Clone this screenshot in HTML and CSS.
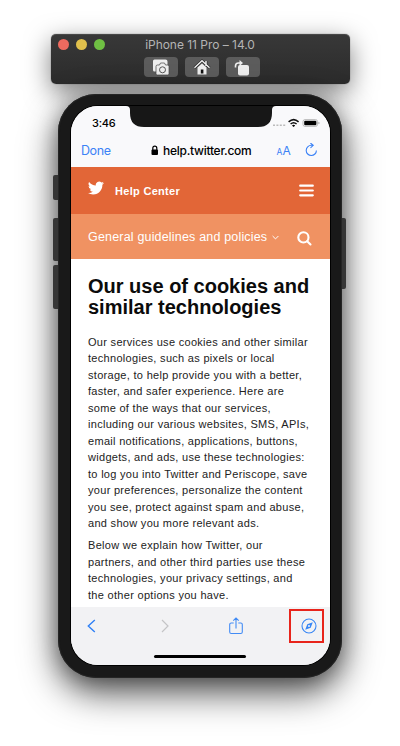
FILE: index.html
```html
<!DOCTYPE html>
<html lang="en">
<head>
<meta charset="utf-8">
<title>iPhone 11 Pro – 14.0</title>
<link rel="stylesheet" href="styles.css">
</head>
<body>
<div class="stage">
  <header class="window-bar">
    <div class="lights"><i class="red"></i><i class="yellow"></i><i class="green"></i></div>
    <div class="window-title">iPhone 11 Pro – 14.0</div>
    <div class="window-buttons">
      <button aria-label="Screenshot"><svg viewBox="0 0 34 20"><path d="M10.500 2.500h11q2 0 2 2v8h-10v2h-3q-1.500 0-1.500-1.500v-9q0-1.500 1.500-1.500z" fill="#eee"/><path d="M13.500 8h2l1-2h4l1 2h2q1.500 0 1.500 1.500v7q0 1.500-1.500 1.500h-10q-1.500 0-1.500-1.500v-7q0-1.500 1.500-1.500z" fill="#eee" stroke="#444" stroke-width=".7"/><circle cx="18.500" cy="12.800" r="3" fill="none" stroke="#555"/></svg></button>
      <button aria-label="Home"><svg viewBox="0 0 34 20"><path d="M21 4v5M9.500 10.800 17 3.800l7.500 7" fill="none" stroke="#222" stroke-width="2.800"/><path d="M21 4v5M9.500 10.800 17 3.800l7.500 7" fill="none" stroke="#eee" stroke-width="1.500"/><path d="M12.500 10.500 17 6.500l4.500 4v7h-9z" fill="#eee"/><path d="M15.800 12.500h2.600v4h-2.600z" fill="#111"/></svg></button>
      <button aria-label="Rotate"><svg viewBox="0 0 34 20"><rect x="12" y="8" width="11" height="10.500" rx="2" fill="#eee"/><path d="M9.500 10.500V9q0-3 3-3h2" fill="none" stroke="#eee" stroke-width="1.600"/><path d="M13.500 3v6l3.500-3z" fill="#eee"/></svg></button>
    </div>
  </header>
  <div class="phone">
    <i class="key mute"></i><i class="key up"></i><i class="key down"></i><i class="key power"></i>
    <main class="screen">
      <svg class="notch" viewBox="0 0 150 21" preserveAspectRatio="none"><path d="M0 0h150q-4 0-4 4v3q0 14-14 14H18Q4 21 4 7V4q0-4-4-4z" fill="#171717"/></svg>
      <div class="status"><span class="time">3:46</span>
        <svg class="signals" width="48" height="10" viewBox="0 0 48 10"><g fill="#bbb"><rect x="0" y="6.500" width="2" height="1.500"/><rect x="3.400" y="6.500" width="2" height="1.500"/><rect x="6.800" y="6.500" width="2" height="1.500"/><rect x="10.200" y="6.500" width="2" height="1.500"/></g><g fill="none" stroke="#111" stroke-width="1.500"><path d="M15.600 3.900q5-4.600 10 0M17.600 6q3-2.600 6 0"/></g><path d="M19 7.500q1.600-1.400 3.200 0L20.600 9z"/><rect x="30" y="1.600" width="14.500" height="6.800" rx="2" fill="#fff" stroke="#aaa" stroke-width=".8"/><rect x="31.200" y="2.700" width="12.200" height="4.600" rx="1"/><path d="M45.500 3.700v2.600q1-.5 1-1.300t-1-1.300z" fill="#999"/></svg>
      </div>
      <nav class="address">
        <span class="done">Done</span>
        <svg class="lock" width="8" height="11" viewBox="0 0 8 11"><rect x=".5" y="4.500" width="6.500" height="5.500" rx="1"/><path d="M1.800 5V3.200q0-2 2-2t2 2V5" fill="none" stroke="#000" stroke-width="1.200"/></svg>
        <span class="host">help.twitter.com</span>
        <span class="textsize"><small>A</small>A</span>
        <svg class="reload" width="13" height="14" viewBox="0 0 13 14" fill="none" stroke="#3b82f6" stroke-width="1.100"><path d="M11.400 7.400a5.100 5.100 0 1 1-5.100-5.100h1.500M5.400 0l2.800 2.300-2.700 2.500"/></svg>
      </nav>
      <section class="brand">
        <svg class="bird" width="16" height="16" viewBox="0 0 24 24"><path fill="#fff" d="M23.950 4.570a10 10 0 0 1-2.820.770 4.960 4.960 0 0 0 2.160-2.720c-.950.550-2 .950-3.130 1.180a4.920 4.920 0 0 0-8.380 4.480A13.900 13.900 0 0 1 1.640 3.160a4.920 4.920 0 0 0 1.520 6.570 4.900 4.900 0 0 1-2.230-.610v.060a4.920 4.920 0 0 0 3.950 4.830 5 5 0 0 1-2.210.080 4.940 4.940 0 0 0 4.600 3.420A9.870 9.870 0 0 1 0 19.540a14 14 0 0 0 7.550 2.210c9.050 0 14-7.500 14-13.980v-.640a10 10 0 0 0 2.400-2.560z"/></svg>
        <strong>Help Center</strong>
        <svg class="menu" width="15" height="13" viewBox="0 0 15 13"><path d="M1.200 1.700h12.600M1.200 6.500h12.600M1.200 11.300h12.600" stroke="#fff" stroke-width="2.200" stroke-linecap="round"/></svg>
      </section>
      <section class="category"><span>General guidelines and policies</span>
        <svg class="chev" width="7" height="5" viewBox="0 0 7 5"><path d="M.6 1 3.500 3.900 6.400 1" fill="none" stroke="#fff"/></svg>
        <svg class="search" width="15" height="15" viewBox="0 0 15 15"><g fill="none" stroke="#fff" stroke-width="2.100" stroke-linecap="round"><circle cx="6.400" cy="6.400" r="5.100"/><path d="m10.200 10.200 3.300 3.300"/></g></svg>
      </section>
      <article>
        <h1>Our use of cookies and<br>similar technologies</h1>
        <p>Our services use cookies and other similar<br>technologies, such as pixels or local<br>storage, to help provide you with a better,<br>faster, and safer experience. Here are<br>some of the ways that our services,<br>including our various websites, SMS, APIs,<br>email notifications, applications, buttons,<br>widgets, and ads, use these technologies:<br>to log you into Twitter and Periscope, save<br>your preferences, personalize the content<br>you see, protect against spam and abuse,<br>and show you more relevant ads.</p>
        <p>Below we explain how Twitter, our<br>partners, and other third parties use these<br>technologies, your privacy settings, and<br>the other options you have.</p>
      </article>
      <footer class="tools">
        <svg width="9" height="14" viewBox="0 0 9 14"><path d="M7.800 1 1.300 7 7.800 13" fill="none" stroke="#2f80f6" stroke-width="1.400"/></svg>
        <svg class="next" width="8" height="14" viewBox="0 0 8 14"><path d="m1 1 6 6-6 6" fill="none" stroke="#c4c4c6" stroke-width="1.200"/></svg>
        <svg class="share" width="14" height="18" viewBox="0 0 14 18" fill="none" stroke="#438cf5" stroke-width="1.100"><path d="M4.700 6H2.200Q.7 6 .7 7.500V15q0 1.500 1.500 1.500h9.600q1.500 0 1.500-1.500V7.500Q13.300 6 11.800 6H9.300M7 11.500V1M4.300 3.600 7 1l2.700 2.600"/></svg>
        <span class="highlight"><svg width="16" height="16" viewBox="0 0 16 16"><circle cx="8" cy="8" r="7" fill="none" stroke="#3987f5" stroke-width="1.100"/><path fill="#3987f5" fill-rule="evenodd" d="m11.800 4.200-2.100 5.500-5.500 2.100 2.100-5.500zM8 7a1 1 0 1 0 0 2 1 1 0 0 0 0-2z"/></svg></span>
        <i class="home-line"></i>
      </footer>
    </main>
  </div>
</div>
</body>
</html>
```
FILE: styles.css
```css
* { box-sizing: border-box; }
body { margin: 0; background: #fff; font-family: "Liberation Sans", Arial, sans-serif; }
svg { display: block; flex: none; }
.stage { width: 400px; height: 746px; padding-top: 34px; overflow: hidden; }
.window-bar { position: relative; width: 299px; height: 50px; margin: 0 0 10px 50.5px; border-radius: 5px; background: linear-gradient(#383838, #2b2b2b); border-top: 1px solid #484848; box-shadow: 0 0 1px #444, 0 8px 26px rgba(0,0,0,.5); }
.lights { position: absolute; left: 7px; top: 4px; display: flex; gap: 7px; }
.lights i { width: 11.3px; height: 11.3px; border-radius: 50%; }
.red { background: #ee6a5f; }
.yellow { background: #e0c04c; }
.green { background: #6fc043; }
.window-title { height: 22px; font: 12px/20px Inter, sans-serif; color: #b4b4b4; text-align: center; white-space: nowrap; letter-spacing: -.03px; }
.window-buttons { display: flex; justify-content: center; gap: 7px; padding-left: 3px; }
.window-buttons button { padding: 0; border: 0; width: 34px; height: 20px; border-radius: 4px; background: #5c5c5c; }
.phone { position: relative; width: 284px; height: 583.5px; margin-left: 58px; padding: 12px 12.500px 13px 13px; border-radius: 38px; background: #191919; box-shadow: inset 0 0 1px 1px #272727, 0 14px 36px rgba(0,0,0,.7), 0 2px 20px rgba(0,0,0,.25); }
.key { position: absolute; width: 5px; left: -5px; border-radius: 2px 0 0 2px; background: #363636; }
.mute { top: 81px; height: 25px; }
.up { top: 124px; height: 43px; }
.down { top: 171px; height: 44px; }
.power { top: 124px; left: 284px; width: 4px; height: 71px; border-radius: 0 2px 2px 0; }
.screen { position: relative; height: 100%; display: flex; flex-direction: column; overflow: hidden; border-radius: 27px; background: #fff; box-shadow: 0 0 0 1px #000; }
.notch { position: absolute; width: 150px; height: 21px; left: 54.500px; top: 0; }
.status { height: 26px; flex: none; display: flex; align-items: center; justify-content: space-between; padding: 7px 9px 0 21px; background: #f9f9fb; }
.time { font: 500 11px/14px Inter, sans-serif; letter-spacing: -.2px; }
.address { height: 35px; flex: none; display: flex; align-items: center; padding: 1px 12px 0 10px; background: #f9f9fb; }
.done { width: 69.500px; font: 12.500px Inter, sans-serif; color: #3b82f6; letter-spacing: -.4px; }
.host { flex: 1; padding-left: 4.500px; font: 500 12px Inter, sans-serif; letter-spacing: -.27px; }
.textsize { width: 28px; font: 12px Inter, sans-serif; color: #3b82f6; white-space: nowrap; }
.textsize small { font-size: 8.500px; }
.brand { height: 47px; flex: none; display: flex; align-items: center; padding: 0 16px 0 17px; background: #e26637; color: #fff; }
.bird { margin-top: -5px; }
.brand strong { flex: 1; padding-left: 11px; font-size: 11px; letter-spacing: .3px; }
.category { height: 45px; flex: none; display: flex; align-items: center; padding: 0 18px 0 17px; background: #f09262; color: #fff; font-size: 12.500px; white-space: nowrap; }
.category span { letter-spacing: .18px; }
.chev { margin: 1px auto 0 5px; }
.search { margin-top: 4px; }
article { flex: 1; min-height: 0; padding: 17px 17px 0; overflow: hidden; }
h1 { margin: 0 0 15.700px; font-size: 20px; line-height: 21px; white-space: nowrap; letter-spacing: 0; color: #0b0b0b; }
p { margin: 0 0 5.500px; font-size: 11px; line-height: 16.500px; letter-spacing: .3px; color: #222; white-space: nowrap; }
.tools { position: relative; height: 57.500px; flex: none; display: flex; align-items: flex-start; padding: 12px 5.500px 0 16px; background: #f2f2f4; }
.next { margin-left: 64.500px; }
.share { margin: -2px 0 0 60px; }
.highlight { display: flex; align-items: center; width: 35.500px; height: 34px; margin: -10px 0 0 auto; padding-left: 10px; border: 2px solid #e8241b; }
.home-line { position: absolute; left: 83px; top: 48px; width: 92px; height: 3px; border-radius: 2px; background: #000; }
```
